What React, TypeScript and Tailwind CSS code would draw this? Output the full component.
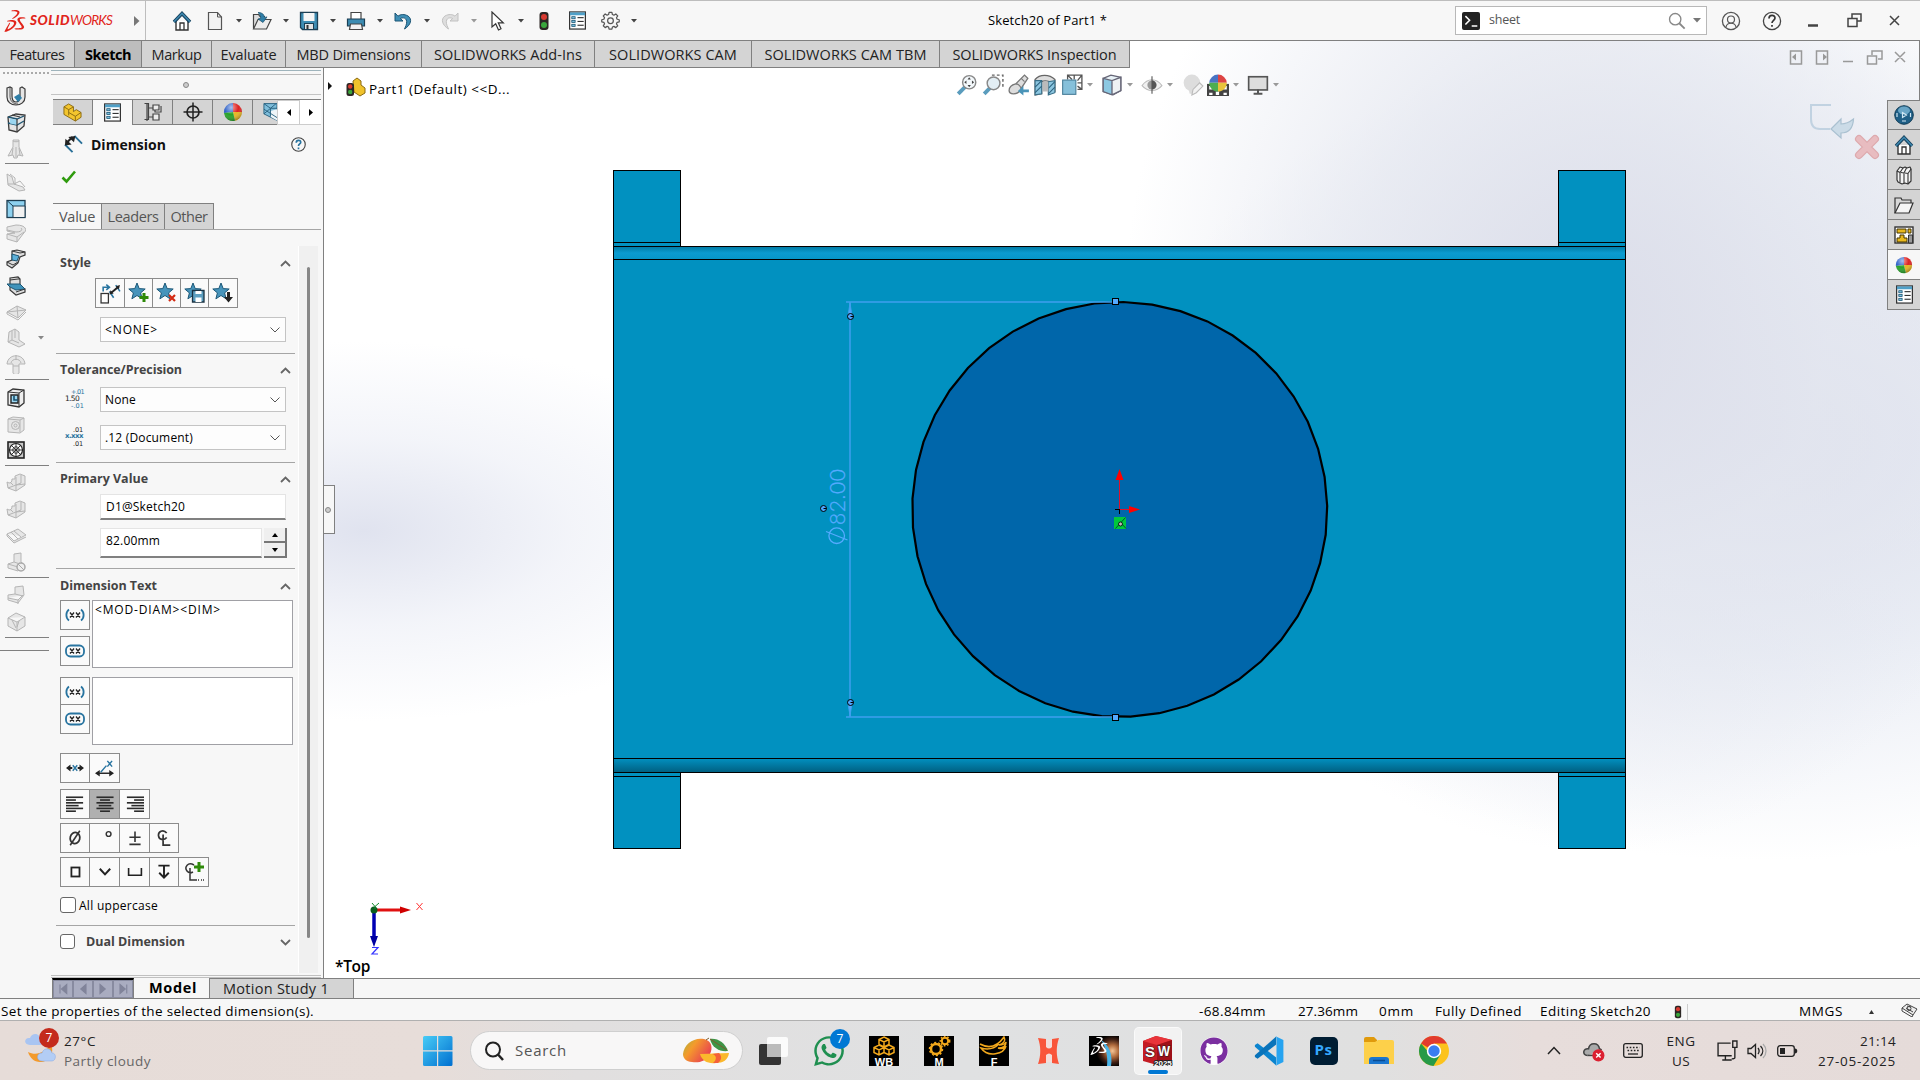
import React, { useLayoutEffect, useRef, useState } from "react";
import { SiDassaultsystemes } from "react-icons/si";
import { FaWhatsapp, FaGithub } from "react-icons/fa";

type Kids = { children?: React.ReactNode };

/* A single line of text whose letter spacing is adjusted to fill a given width. */
function T({ w, className = "", children }: { w: number; className?: string; children: string }) {
  const ref = useRef<HTMLSpanElement>(null);
  const [ls, setLs] = useState(0);
  useLayoutEffect(() => {
    if (ref.current) setLs((w - ref.current.getBoundingClientRect().width) / children.length);
  }, []);
  return (
    <span ref={ref} className={"inline-block shrink-0 whitespace-pre " + className} style={{ letterSpacing: ls }}>
      {children}
    </span>
  );
}

function I({ s = 20, h, vb = "0 0 20 20", className = "", children }: Kids & { s?: number; h?: number; vb?: string; className?: string }) {
  return (
    <svg width={s} height={h ?? s} viewBox={vb} fill="none" className={"shrink-0 " + className}>
      {children}
    </svg>
  );
}

const Caret = ({ c = "#444" }: { c?: string }) => (
  <span className="flex w-[23px] justify-center">
    <I s={6} h={4} vb="0 0 6 4"><path d="M0 0h6L3 3.5z" fill={c} /></I>
  </span>
);

const Box = ({ children }: Kids) => <span className="flex h-6 w-6 items-center justify-center">{children}</span>;

const House = () => (
  <I><path d="M4 10v9h12v-9" fill="#fff" stroke="#333" strokeWidth="1.4" /><path d="M8 19v-7h4v7" stroke="#333" strokeWidth="1.3" /><path d="M2 11l8-8.500 8 8.500" stroke="#16405c" strokeWidth="3.400" /><path d="M2 10.800l8-8.300 8 8.300" stroke="#3d86ad" strokeWidth="1.600" /></I>
);

const Ball = ({ s = 18 }: { s?: number }) => (
  <I s={s}>
    <defs><radialGradient id="shine" cx=".4" cy=".25" r=".8"><stop offset="0" stopColor="#fff" stopOpacity=".6" /><stop offset=".5" stopColor="#fff" stopOpacity="0" /><stop offset="1" stopColor="#000" stopOpacity=".4" /></radialGradient></defs>
    <path d="M10 10L1 11A9 9 0 0 1 10 1z" fill="#2f62c9" /><path d="M10 10V1a9 9 0 0 1 9 9z" fill="#d22" /><path d="M10 10l9 0a9 9 0 0 1-7 8.800z" fill="#e8b620" /><path d="M10 10l2 8.800A9 9 0 0 1 1 11z" fill="#27a327" />
    <circle cx="10" cy="10" r="9" fill="url(#shine)" />
  </I>
);

const ListIcon = ({ s = 20 }: { s?: number }) => (
  <I s={s}>
    <rect x="1.700" y="1" width="16.600" height="18" fill="#fff" stroke="#333" strokeWidth="1.300" />
    <rect x="2" y="1.500" width="16" height="3" fill="#4fa0c8" />
    {[7, 11, 15].map((y) => <g key={y}><rect x="4" y={y - 1} width="3.500" height="2.200" fill="#7cc2e0" stroke="#17506f" strokeWidth=".8" /><path d={`M10 ${y}h6.500`} stroke="#333" strokeWidth="1.200" /></g>)}
  </I>
);

const Traffic = ({ s = 20 }: { s?: number }) => (
  <I s={s}><rect x="5.500" y="1" width="9" height="18" rx="3" fill="#2c2624" /><circle cx="10" cy="6" r="3" fill="#d83a30" /><circle cx="10" cy="14" r="3" fill="#3aa63c" /></I>
);

function TitleBar() {
  return (
    <div className="flex h-[41px] shrink-0 items-center border-b border-t border-b-[#808080] border-t-[#bdbdbd] bg-[#f7f7f7]">
      <div className="flex h-full w-[146px] items-center border-r border-[#bdbdbd]">
        <div className="ml-[4px] w-[26px] text-[#e1251b]"><SiDassaultsystemes size={22} /></div>
        <div className="flex items-baseline font-[Lato] text-[13.500px] italic leading-none text-[#e1251b]">
          <T w={40} className="font-black">SOLID</T>
          <T w={42}>WORKS</T>
        </div>
        <I s={6} h={10} vb="0 0 6 10" className="ml-[22px]"><path d="M0 0l5.500 5L0 10z" fill="#777" /></I>
      </div>
      <div className="ml-6 flex items-center">
        <Box><House /></Box>
        <span className="w-[9px]" />
        <Box><I><path d="M3.500 1.500h9l4 4.500v12.500h-13z" fill="#f3f3f3" stroke="#555" strokeWidth="1.200" /><path d="M12.500 1.500v4.500h4" stroke="#555" /></I></Box><Caret />
        <Box><I><path d="M1.500 17.500v-14h5l1.500 2h5" fill="#ddd" stroke="#444" strokeWidth="1.200" /><path d="M1.500 18L6 8.500h13L14.500 18z" fill="#ececec" stroke="#444" strokeWidth="1.200" /><path d="M6 1.500c4 0 6 1.500 6.500 5l2.500-.6-4 5.600-5-3.500 2.700-.7C8.500 5 8 3 6 1.500z" fill="#2f7fa8" stroke="#1a4d69" strokeWidth=".7" /></I></Box><Caret />
        <Box><I><path d="M1.500 1.500h17v17h-15l-2-2z" fill="#3f8db3" stroke="#1c3f54" strokeWidth="1.300" /><rect x="4.500" y="2" width="11" height="8" fill="#f6f6f6" /><rect x="5.500" y="12.500" width="9" height="6" fill="#e4e4e4" stroke="#1c3f54" /><rect x="7.500" y="14" width="2" height="4" fill="#333" /></I></Box><Caret />
        <Box><I><path d="M5 8V1.500h10V8" fill="#fff" stroke="#444" strokeWidth="1.200" /><path d="M1.500 8h17v7h-17z" fill="#3c8bb1" stroke="#1c3f54" strokeWidth="1.200" /><path d="M3.500 18.500l1-5.500h11l1 5.500z" fill="#f2f2f2" stroke="#444" strokeWidth="1.200" /></I></Box><Caret />
        <Box><I><path d="M2 2v8h8L7.300 7.500c4-2 8 .5 5.700 7l-1.500 3.500C18 14 19.500 8 15 5 11.500 3 7.500 3 5 5.200z" fill="#3f8fb6" stroke="#1b5474" strokeWidth="1" /></I></Box><Caret />
        <Box><I><path d="M18 2v8h-8l2.700-2.500c-4-2-8 .5-5.700 7l1.500 3.500C2 14 .5 8 5 5c3.500-2 7.500-2 10 .2z" fill="#dedede" stroke="#c2c2c2" strokeWidth="1" /></I></Box><Caret c="#999" />
        <Box><I><path d="M5 1v15l3.700-3.300L11.500 19l2.500-1.200-2.700-6h5z" fill="#fff" stroke="#333" strokeWidth="1.200" /></I></Box><Caret />
        <Box><Traffic /></Box>
        <span className="w-[9px]" />
        <Box><ListIcon s={19} /></Box>
        <span className="w-[9px]" />
        <Box><I s={19}>
          <path d="M8.500 1.500h3l.5 2.200 1.600.7 2-1.300 2 2-1.300 2 .7 1.600 2.200.5v2.200l-2.200.5-.7 1.600 1.300 2-2 2-2-1.300-1.600.7-.5 2.200h-3L8 16.900l-1.600-.7-2 1.300-2-2 1.300-2L3 11.900l-2.200-.5V9.200L3 8.700l.7-1.600-1.300-2 2-2 2 1.300L8 3.700z" stroke="#555" strokeWidth="1.300" strokeLinejoin="round" /><circle cx="10" cy="10.200" r="3" stroke="#555" strokeWidth="1.300" /></I></Box><Caret />
      </div>
      <div className="ml-[343px] text-[13px]"><T w={119}>Sketch20 of Part1 *</T></div>
      <div className="ml-[348px] flex h-[29px] w-[252px] items-center border border-[#b8b8b8] bg-white">
        <div className="ml-[6px] mr-[9px] flex h-[18px] w-[18px] items-center justify-center rounded-[2px] bg-[#222]">
          <I s={14}><path d="M2 3l6 6-6 6M11 17h8" stroke="#fff" strokeWidth="2.200" /></I>
        </div>
        <T w={31} className="text-[12.500px] text-[#555]">sheet</T>
        <I s={18} className="ml-[148px]"><circle cx="8" cy="8" r="6.300" stroke="#888" strokeWidth="1.500" /><path d="M12.500 12.500l6 6" stroke="#888" strokeWidth="2" /></I>
        <I s={8} h={5} vb="0 0 8 5" className="ml-[7px]"><path d="M0 0h8L4 4.500z" fill="#777" /></I>
      </div>
      <I s={20} className="ml-[14px]"><circle cx="10" cy="10" r="8.600" stroke="#555" strokeWidth="1.300" /><circle cx="10" cy="8.500" r="3.500" stroke="#555" strokeWidth="1.200" /><path d="M5 16c1-5 9-5 10 0" stroke="#555" strokeWidth="1.200" /></I>
      <I s={20} className="ml-[21px]"><circle cx="10" cy="10" r="8.600" stroke="#444" strokeWidth="1.300" /><path d="M7 7.500c0-4 6-4 6-.5 0 2.200-3 2.500-3 5M10 14v1.800" stroke="#333" strokeWidth="1.700" /></I>
      <I s={10} h={3} vb="0 0 10 3" className="ml-[26px] mt-[10px]"><path d="M0 1.500h10" stroke="#444" strokeWidth="2.500" /></I>
      <I s={15} vb="0 0 15 15" className="ml-[29px]"><path d="M5 5V1h9v7h-4" stroke="#444" strokeWidth="1.500" /><path d="M1 5.500h9v8H1z" stroke="#444" strokeWidth="1.500" /></I>
      <I s={11} vb="0 0 11 11" className="ml-[27px]"><path d="M1 1l9 9M10 1l-9 9" stroke="#444" strokeWidth="1.500" /></I>
    </div>
  );
}

const tabs: [string, number, number][] = [
  ["Features", 75, 55], ["Sketch", 67, 46], ["Markup", 70, 50], ["Evaluate", 74, 56], ["MBD Dimensions", 136, 114],
  ["SOLIDWORKS Add-Ins", 173, 148], ["SOLIDWORKS CAM", 157, 128], ["SOLIDWORKS CAM TBM", 188, 162], ["SOLIDWORKS Inspection", 190, 164],
];

function CommandTabs() {
  return (
    <div className="flex h-[27px] w-[1130px] shrink-0 border-b border-[#808080] bg-[#d4d4d4]">
      {tabs.map(([t, w, tw]) => (
        <div key={t} style={{ width: w }} className={"flex shrink-0 items-center justify-center border-r border-[#808080] pt-px text-[14.500px] text-[#222] " + (t === "Sketch" ? "bg-[#bdbdbd] font-bold text-black" : "")}>
          <T w={tw}>{t}</T>
        </div>
      ))}
    </div>
  );
}

/* Sheet-metal command glyphs; those filled with currentColor are drawn as unavailable commands. */
const shapes: Record<string, React.ReactNode> = {
  channel: <><path d="M1 2l3-1 2 1v8c0 4 1 6 4 6s4-2 4-6V2l2-1 3 2v8c0 5-4 8-9 8s-9-3-9-8z" fill="#e5e5e5" stroke="#3a3a3a" strokeWidth="1.200" /><path d="M4 1v9c0 5 3 8 8 8" stroke="#3a3a3a" strokeWidth=".8" /><path d="M8 11l5-3 3 4-4 4z" fill="#2f7fa8" /></>,
  wrap: <><path d="M2 4l8-3 9 1-1 11-7 6-8-2z" fill="#e5e5e5" stroke="#3a3a3a" strokeWidth="1.300" /><path d="M2 4l9 2 7-3M2 10l9 2 7-4" stroke="#1f5673" strokeWidth="1.300" /><path d="M4 5.500l7 1.500v5l-7-1.500z" fill="#9bd6f0" /><path d="M11 6v12M6 2l8 2" stroke="#3a3a3a" strokeWidth="1.200" /></>,
  flare: <><path d="M7 1h6v7l4 9-5-1-1 3H8l-1-3-5 1 5-9z" fill="currentColor" stroke="#b5b5b5" /><path d="M7 2c1 1 5 1 6 0M10 8v10M7 9l-1 7M13 9l1 7" stroke="#b5b5b5" /></>,
  edge: <><path d="M1 2l5 3 2 7 9 3 2 3-6 1-11-6z" fill="currentColor" stroke="#b5b5b5" /><path d="M4 2l5 4v7M2 12l6 0M8 12l6-3 5 6" stroke="#b5b5b5" /></>,
  miter: <><rect x="1" y="1.500" width="18" height="17" fill="#8dd1ef" stroke="#1d3d50" strokeWidth="1.300" /><path d="M7 7h12v11.500H7z" fill="#f1f1f1" stroke="#1d3d50" /><path d="M1.500 2L7 7" stroke="#1d3d50" /></>,
  hem: <><path d="M1 3l9-2c10 0 12 5 7 9l-6 8-10-3v-5l8-1-8-2z" fill="currentColor" stroke="#b5b5b5" /><path d="M1 6l9 2c5 0 7-2 5-4M1 10l10 3 7-5M11 13v5" stroke="#b5b5b5" /></>,
  jog: <><path d="M6 2l5-1 8 2v3l-5 2-2 6-6 5-5-3v-3l5-2z" fill="#ddd" stroke="#3a3a3a" strokeWidth="1.200" /><path d="M6 5l7 2-2 5-5-1z" fill="#5db1da" stroke="#1f5673" /><path d="M6 2l8 2 5-1M1 13l6 3 5-3" stroke="#3a3a3a" /></>,
  bend: <><path d="M4 2l8-1 2 2v8l5 2v3l-9 3-6-5z" fill="#ddd" stroke="#3a3a3a" strokeWidth="1.200" /><path d="M1 8l13 0 5 5-9 1-6-3z" fill="#3f93bb" stroke="#1f5673" /><path d="M4 4l8-1 2 0M10 16l9-3" stroke="#3a3a3a" /></>,
  cross: <><path d="M1 10l10-6 9 4-8 8z" fill="currentColor" stroke="#b5b5b5" /><path d="M1 10l19-2M11 4l1 12M1 10v2l11 6 8-8" stroke="#b5b5b5" /></>,
  corner: <><path d="M3 4l6-3 4 3v8l6 4-6 3-11-5z" fill="currentColor" stroke="#b5b5b5" /><path d="M6 3v9l-4 2M6 12l7 3M9 1v9" stroke="#b5b5b5" /></>,
  form: <><path d="M1 10c1-11 17-11 18 0h-6v9c-1 2-5 2-6 0v-9z" fill="currentColor" stroke="#b5b5b5" /><path d="M5 9c1-5 9-5 10 0M10 1v5M7 12h6" stroke="#b5b5b5" /></>,
  cut: <><path d="M2 4l5-3 11 1v13l-5 4-11-2z" fill="#eee" stroke="#333" strokeWidth="1.300" /><path d="M2 4l11 1 5-3M13 5v14" stroke="#333" /><path d="M5 7h7v8H5z" fill="#9bd6f0" stroke="#222" strokeWidth="1.400" /><path d="M8 8v4h4" stroke="#17506f" strokeWidth="1.600" /></>,
  hole: <><path d="M2 4l5-2 11 1v12l-4 3-12-1z" fill="currentColor" stroke="#b5b5b5" /><circle cx="9.500" cy="10.500" r="4" stroke="#b5b5b5" /><circle cx="9.500" cy="10.500" r="1.500" stroke="#b5b5b5" /><path d="M2 4l12 1 4-2M14 5v12" stroke="#b5b5b5" /></>,
  vent: <><rect x="2" y="2" width="16" height="16" fill="#c9c9c9" stroke="#222" strokeWidth="1.600" /><circle cx="10" cy="10" r="6.500" fill="#fff" stroke="#222" strokeWidth="1.200" /><circle cx="10" cy="10" r="3.300" stroke="#222" strokeWidth=".8" /><path d="M10 3v14M3 10h14M5 5l10 10M15 5L5 15" stroke="#222" strokeWidth=".9" /></>,
  unfold: <><path d="M9 3l5-2 5 2v9l-9 6-8-3-1-6 2 1c2 0 3-1 3-4h3z" fill="currentColor" stroke="#b5b5b5" /><path d="M10 4v8l5-2V2M2 15l8-3 9-1M10 12v6M4 9l3 3" stroke="#b5b5b5" /></>,
  flat: <path d="M1 8l11-5 8 6-12 6zM5 6l7 7M8 5l7 6M1 8v2l7 7 12-6" fill="currentColor" stroke="#b5b5b5" />,
  nobend: <><path d="M8 2l7-1v9l3 3-6 6-10-3v-4l6-2zM8 10l6 2M2 12l10 3" fill="currentColor" stroke="#b5b5b5" /><circle cx="15" cy="15" r="4" fill="#eee" stroke="#aaa" strokeWidth="1.500" /><path d="M12 12l6 6" stroke="#aaa" /></>,
  rip: <path d="M9 2l8-1 1 9-6 8-10-3v-5l7-1zM9 9l8 2M2 13l10 2 5-5M12 15v4" fill="currentColor" stroke="#b5b5b5" />,
  cube: <path d="M2 6l8-5 9 4v9l-8 5-9-5zM2 6l9 4 8-5M11 10v9M13 9l-2 6M6 8l4 8" fill="currentColor" stroke="#b5b5b5" />,
};
const rail: [string, number][] = [
  ["channel", 27], ["wrap", 27], ["flare", 26], ["-", 2], ["edge", 28], ["miter", 25], ["hem", 25], ["jog", 26], ["bend", 27], ["cross", 26], ["corner", 25], ["form", 27], ["-", 3],
  ["cut", 28], ["hole", 25], ["vent", 26], ["-", 3], ["unfold", 26], ["unfold", 27], ["flat", 26], ["nobend", 26], ["-", 3], ["rip", 26], ["cube", 27], ["-", 3],
];

function LeftRail() {
  return (
    <div className="flex w-[51px] shrink-0 flex-col bg-[#f7f7f7]">
      <div className="mb-[7px] ml-[3px] mt-[4px] h-[3px] w-[46px] shrink-0 border-t-2 border-dotted border-[#aaa]" />
      {rail.map(([n, h], i) =>
        n === "-" ? (
          <div key={i} style={{ height: h }} className="mb-[4px] ml-[5px] w-[44px] shrink-0 border-b border-[#808080]" />
        ) : (
          <div key={i} style={{ height: h }} className="flex shrink-0 items-center pl-[6px] text-[#e6e6e6]">
            <I s={20}>{shapes[n]}</I>
            {n === "corner" && <I s={6} h={4} vb="0 0 6 4" className="ml-[12px]"><path d="M0 0h6L3 3.500z" fill="#888" /></I>}
          </div>
        )
      )}
      <div className="mt-[8px] w-[49px] border-b border-[#808080]" />
    </div>
  );
}

const Head = ({ w, down, children }: { w: number; down?: boolean; children: string }) => (
  <div className="flex h-[22px] items-center justify-between pr-[7px] text-[12.500px] font-bold text-[#444]">
    <T w={w}>{children}</T>
    <I s={11} h={7} vb="0 0 11 7"><path d={down ? "M1 1l4.500 4.500L10 1" : "M1 6l4.500-4.500L10 6"} stroke="#666" strokeWidth="1.800" /></I>
  </div>
);
const Rule = () => <div className="-ml-[4px] h-px w-[239px] shrink-0 bg-[#a5a5a5]" />;
const Select = ({ w, children }: { w: number; children: string }) => (
  <div className="flex h-[25px] w-[186px] items-center justify-between border border-[#c4c4c4] bg-[#fdfdfd] pl-[4px] pr-[5px] text-[12px]">
    <T w={w}>{children}</T>
    <I s={10} h={6} vb="0 0 10 6"><path d="M.5 .5L5 5 9.500 .5" stroke="#555" /></I>
  </div>
);
const Btn = ({ on, first, w = "w-[30px]", children }: Kids & { on?: boolean; first?: boolean; w?: string }) => (
  <div className={"flex h-[30px] shrink-0 items-center justify-center border border-[#8c8c8c] " + w + (on ? " bg-[#b0b0b0]" : " bg-[#fafafa]") + (first ? "" : " -ml-px")}>{children}</div>
);
const Star = ({ children }: Kids) => (
  <I s={22} vb="0 0 22 22"><path d="M9 1l2.200 5.600 6 .4-4.600 3.900 1.500 5.900L9 13.500l-5.100 3.300 1.500-5.900L.8 7l6-.4z" fill="#4794bb" stroke="#1d5878" strokeWidth="1" />{children}</I>
);
const XX = ({ boxed }: { boxed?: boolean }) => (
  <I s={20} h={14} vb="0 0 20 14">
    {boxed ? <rect x="1" y="1.500" width="18" height="11" rx="4.500" stroke="#2874a0" strokeWidth="1.800" /> : <path d="M4 1.500C.5 4 .5 10 4 12.500M16 1.500c3.500 2.500 3.500 8.500 0 11" stroke="#2874a0" strokeWidth="1.800" />}
    <path d="M5 4.500l4 5M9 4.500l-4 5M11 4.500l4 5M15 4.500l-4 5" stroke="#222" strokeWidth="1.300" />
  </I>
);
const Lines = ({ a }: { a: number }) => (
  <I s={18}>{[0, 1, 2, 3, 4, 5].map((i) => { const w = i % 2 ? (i === 3 ? 14 : 11) : 19; return <path key={i} d={`M${(20 - w) * a} ${2.500 + i * 3.100}h${w}`} stroke="#2b2b2b" strokeWidth="1.800" />; })}</I>
);

function PropertyPanel() {
  const ptab = "flex w-[40px] shrink-0 items-center justify-center border-r border-[#808080] bg-[#d4d4d4] border-b";
  return (
    <div className="flex w-[273px] shrink-0 flex-col border-r border-[#808080] bg-[#f7f7f7]">
      <div className="mt-[2px] h-[5px] w-[270px] shrink-0 border-b border-t border-b-[#bbb] border-t-[#9fb4bc]" />
      <div className="flex h-[20px] w-[270px] shrink-0 items-center justify-center border-b border-[#c4c4c4]"><div className="h-[6px] w-[6px] rounded-full border border-[#888] bg-[#ccc]" /></div>
      <div className="ml-[2px] mt-[4px] flex h-[26px] w-[268px] shrink-0 border-t border-[#808080]">
        <div className={ptab}><I s={19}><path d="M1 4l5-3 5 3v5l3-2 5 3v5l-6 4-12-7z" fill="#f3c52e" stroke="#8a6a12" /><path d="M1 4l5 3v6M6 7l5-3M13 19v-5l6-4M13 14l-7-4" stroke="#8a6a12" /></I></div>
        <div className="flex w-[40px] shrink-0 items-center justify-center border-r border-[#808080]"><ListIcon s={19} /></div>
        <div className={ptab}><I s={20}><path d="M4 1v18M1.500 1.500h4v16h-4M5 6h5M5 15h5" stroke="#444" strokeWidth="1.200" /><path d="M10 3h6v5h-6zM10 12h6v6h-6zM12 8v2h6v-6" fill="#eee" stroke="#444" strokeWidth="1.200" /></I></div>
        <div className={ptab}><I s={20}><circle cx="10" cy="10" r="6" stroke="#222" strokeWidth="1.700" /><path d="M10 .5v19M.5 10h19" stroke="#222" strokeWidth="1.500" /></I></div>
        <div className={ptab}><Ball s={20} /></div>
        <div className="flex w-[24px] shrink-0 items-center justify-end border-b border-[#808080] bg-[#d4d4d4]"><I s={14} h={20} vb="0 0 15 20"><path d="M1 1h14v18L1 12z" fill="#7fbedb" stroke="#28617f" /><path d="M8 9l7-2v12l-7-4z" fill="#eef5f8" /><path d="M1 1l7 5v9M8 6h7M1 7l14 9M1 12L14 1" stroke="#28617f" /></I></div>
        <div className="flex w-[23px] shrink-0 items-center justify-center border border-[#ccc] bg-white"><I s={4} h={7} vb="0 0 4 7"><path d="M4 0v7L0 3.500z" fill="#000" /></I></div>
        <div className="flex w-[21px] shrink-0 items-center justify-center border-b border-[#ccc] bg-white"><I s={4} h={7} vb="0 0 4 7"><path d="M0 0v7l4-3.500z" fill="#000" /></I></div>
      </div>
      <div className="flex h-[38px] shrink-0 items-center pl-[13px]">
        <I s={19}><path d="M1 10l8 8M11 1l8 8" stroke="#2a7098" strokeWidth="2" /><path d="M3 8l6-6" stroke="#222" strokeWidth="2.200" /><path d="M1 11l.5-7 6.500 6zM12 1L4.500 2l6 5.500z" fill="#222" /></I>
        <T w={75} className="ml-[8px] text-[14px] font-bold text-[#111]">Dimension</T>
        <I s={15} className="ml-[125px]"><circle cx="10" cy="10" r="9" stroke="#444" strokeWidth="1.500" /><path d="M7 7.500c0-4 6-4 6-.5 0 2.200-3 2.500-3 5M10 14v2.200" stroke="#2874a0" strokeWidth="2.200" /></I>
      </div>
      <div className="h-[40px] shrink-0 pl-[10px] pt-[7px]"><I s={16} h={14} vb="0 0 16 14"><path d="M1.500 7.500l4 4 8.500-10" stroke="#2f9b0e" strokeWidth="2.600" /></I></div>
      <div className="flex h-[27px] w-[270px] shrink-0 border-b border-[#a5a5a5] pl-[2px] text-[14.500px] text-[#555]">
        <div className="flex w-[49px] items-center justify-center border-r border-t border-[#808080]"><T w={36}>Value</T></div>
        <div className="flex w-[63px] items-center justify-center border-r border-t border-[#808080] bg-[#d4d4d4]"><T w={51}>Leaders</T></div>
        <div className="flex w-[49px] items-center justify-center border-r border-t border-[#808080] bg-[#d4d4d4]"><T w={37}>Other</T></div>
      </div>
      <div className="mt-[16px] flex h-[729px] shrink-0">
        <div className="flex w-[247px] flex-col pl-[9px]">
          <div className="mt-[6px] h-[26px]"><Head w={31}>Style</Head></div>
          <div className="ml-[35px] flex h-[30px] shrink-0">
            <Btn first><I s={21}><rect x="1" y="10" width="7" height="9" fill="#fff" stroke="#333" strokeWidth="1.200" /><path d="M3 8V4h5M6 1.500L9 4 6 6.500" stroke="#2874a0" strokeWidth="1.500" /><path d="M9 8l4 6M15 2l4 6" stroke="#2874a0" strokeWidth="1.500" /><path d="M11 9l6-5" stroke="#222" strokeWidth="1.800" /><path d="M9 11l1-4 3 3zM19 2l-4 1 3 3z" fill="#222" /></I></Btn>
            <Btn w="w-[29px]"><Star><path d="M16 11v9M11.500 15.500h9" stroke="#2f8a0a" strokeWidth="3" /></Star></Btn>
            <Btn w="w-[29px]"><Star><path d="M13 13l6 6M19 13l-6 6" stroke="#d42a12" strokeWidth="2.200" /></Star></Btn>
            <Btn w="w-[29px]"><Star><path d="M8.500 8.500H20V20H8.500z" fill="#5d9fc0" stroke="#1b3343" strokeWidth="1.300" /><path d="M11.500 9h6v3h-6zM11.500 15.500h6V20h-6z" fill="#fff" /></Star></Btn>
            <Btn w="w-[30px]"><Star><path d="M15 10v5h-3l4.500 5.500L21 15h-3v-5z" fill="#222" /></Star></Btn>
          </div>
          <div className="ml-[40px] mt-[9px] h-[36px] shrink-0"><Select w={53}>{"<NONE>"}</Select></div>
          <Rule />
          <div className="mt-[5px] h-[28px] shrink-0"><Head w={122}>Tolerance/Precision</Head></div>
          <div className="flex h-[38px] shrink-0">
            <div className="relative w-[40px] font-[DejaVu_Sans] text-[6.500px] leading-none text-[#2874a0]"><span className="absolute left-[11px] top-[2px]"><T w={13}>+.01</T></span><span className="absolute left-[5px] top-[8px] text-[7.500px] text-[#222]"><T w={14}>1.50</T></span><span className="absolute left-[11px] top-[16px]"><T w={13}>-.01</T></span></div>
            <Select w={31}>None</Select>
          </div>
          <div className="flex h-[37px] shrink-0">
            <div className="relative w-[40px] font-[DejaVu_Sans] text-[6.500px] leading-none text-[#222]"><span className="absolute left-[13px] top-[2px]"><T w={10}>.01</T></span><span className="absolute left-[5px] top-[8px] text-[7px] font-bold text-[#2874a0]"><T w={18}>x.xxx</T></span><span className="absolute left-[13px] top-[16px]"><T w={10}>.01</T></span></div>
            <Select w={88}>.12 (Document)</Select>
          </div>
          <Rule />
          <div className="mt-[5px] h-[26px] shrink-0"><Head w={88}>Primary Value</Head></div>
          <div className="ml-[40px] flex h-[26px] w-[186px] shrink-0 items-center border border-b-2 border-[#e4e4e4] border-b-[#808080] bg-white pl-[5px] text-[12px]"><T w={79}>D1@Sketch20</T></div>
          <div className="ml-[40px] mt-[8px] flex h-[30px] shrink-0">
            <div className="w-[162px] border border-b-2 border-[#e4e4e4] border-b-[#808080] bg-white pl-[5px] pt-[3px] text-[12px]"><T w={54}>82.00mm</T></div>
            <div className="ml-[2px] flex w-[23px] flex-col">
              {[0, 1].map((k) => <div key={k} className="flex h-[15px] items-center justify-center border-b-2 border-r-2 border-[#777] bg-[#efefef]"><I s={6} h={4} vb="0 0 6 4"><path d={k ? "M0 0h6L3 4z" : "M0 4h6L3 0z"} fill="#000" /></I></div>)}
            </div>
          </div>
          <div className="h-[10px] shrink-0" />
          <Rule />
          <div className="mt-[6px] h-[25px] shrink-0"><Head w={97}>Dimension Text</Head></div>
          <div className="flex h-[77px] shrink-0">
            <div className="flex w-[32px] flex-col gap-[6px]"><Btn first><XX /></Btn><Btn first><XX boxed /></Btn></div>
            <div className="h-[68px] w-[201px] border border-[#a0a0a5] bg-white pl-[2px] text-[12px] leading-[18px]"><T w={126}>{"<MOD-DIAM><DIM>"}</T></div>
          </div>
          <div className="flex h-[76px] shrink-0">
            <div className="flex w-[32px] flex-col"><Btn first><XX /></Btn><div className="-mt-[3px]"><Btn first><XX boxed /></Btn></div></div>
            <div className="h-[68px] w-[201px] border border-[#a0a0a5] bg-white" />
          </div>
          <div className="flex h-[36px] shrink-0">
            <Btn first><I s={18}><path d="M0 10l5-4v3h2v2H5v3zM20 10l-5-4v3h-2v2h2v3z" fill="#222" /><path d="M7.500 7l5 6M12.500 7l-5 6" stroke="#2874a0" strokeWidth="1.600" /></I></Btn>
            <Btn w="w-[31px]"><I s={19}><path d="M2 15h16" stroke="#222" strokeWidth="1.500" /><path d="M0 15l5-3.500v7zM20 15l-5-3.500v7z" fill="#222" /><path d="M13 2l5 6M18 2l-5 6M6 14l6-7" stroke="#2874a0" strokeWidth="1.500" /></I></Btn>
          </div>
          <div className="flex h-[34px] shrink-0"><Btn first><Lines a={0} /></Btn><Btn on w="w-[31px]"><Lines a={0.5} /></Btn><Btn w="w-[31px]"><Lines a={1} /></Btn></div>
          <div className="flex h-[34px] shrink-0">
            <Btn first><I s={16}><ellipse cx="10" cy="10" rx="6" ry="7" stroke="#333" strokeWidth="2.200" transform="rotate(15 10 10)" /><path d="M4 19L16 1" stroke="#333" strokeWidth="2" /></I></Btn>
            <Btn w="w-[31px]"><I s={16}><circle cx="14.500" cy="5" r="3" stroke="#333" strokeWidth="1.800" /></I></Btn>
            <Btn w="w-[31px]"><I s={16}><path d="M3 9h14M10 2v13M3 18h14" stroke="#333" strokeWidth="2" /></I></Btn>
            <Btn w="w-[30px]"><I s={18}><path d="M13 4.500C9-.5 3 3 4 8c.5 4 6 5 9 1.500M9 6v12h8" stroke="#333" strokeWidth="1.900" /></I></Btn>
          </div>
          <div className="flex h-[40px] shrink-0">
            <Btn first><I s={18}><rect x="6" y="5" width="9" height="10" stroke="#222" strokeWidth="2" /></I></Btn>
            <Btn w="w-[31px]"><I s={16}><path d="M3.500 6l6.500 7 6.500-7" stroke="#222" strokeWidth="2.500" /></I></Btn>
            <Btn w="w-[31px]"><I s={16}><path d="M2 5v9h16V5" stroke="#222" strokeWidth="2" /></I></Btn>
            <Btn w="w-[30px]"><I s={16}><path d="M3 2h14M10 2v14M4 11l6 6 6-6" stroke="#222" strokeWidth="2.400" /></I></Btn>
            <Btn w="w-[31px]"><I s={20}><path d="M10 3C4-.5 0 5 3 9c1.500 2 4 2 6 1M6 6v12h7M14 18h1M17 18h1M19 18h1" stroke="#333" strokeWidth="1.500" /><path d="M15 0v10M10 5h10" stroke="#2f8a0a" strokeWidth="3" /></I></Btn>
          </div>
          <div className="flex h-[28px] shrink-0 gap-[3px] text-[12px] leading-[17px]"><div className="h-[16px] w-[16px] rounded-[3px] border border-[#666] bg-white" /><T w={79}>All uppercase</T></div>
          <Rule />
          <div className="flex h-[32px] shrink-0 items-center"><div className="mb-[2px] mr-[11px] h-[15px] w-[15px] rounded-[3px] border border-[#666] bg-white" /><div className="w-[212px]"><Head w={99} down>Dual Dimension</Head></div></div>
        </div>
        <div className="flex h-[727px] w-[20px] justify-center border-l border-white bg-[#f0f0f0] pt-[21px]"><div className="h-[671px] w-[3px] rounded bg-[#868686]" /></div>
      </div>
      <div className="h-[3px] w-[270px] border-b border-t border-[#c0c0c0]" />
    </div>
  );
}

const arc = Array.from({ length: 45 }, (_, k) => {
  const a = ((3 + 8 * k) * Math.PI) / 180;
  return `${(1119.700 - 207.500 * Math.cos(a)).toFixed(1)},${(509.500 - 207.500 * Math.sin(a)).toFixed(1)}`;
}).join(" ");

/* Graphics area: coordinates are window pixels. */
function Model() {
  return (
    <svg className="absolute inset-0" width={1596} height={937} viewBox="324 41 1596 937" fill="none">
      <defs>
        <linearGradient id="bt" x1="0" y1="0" x2="0" y2="1"><stop offset="0" stopColor="#007aa3" /><stop offset=".5" stopColor="#0b9bd0" /><stop offset="1" stopColor="#0696c8" /></linearGradient>
        <linearGradient id="bb" x1="0" y1="0" x2="0" y2="1"><stop offset="0" stopColor="#0290c0" /><stop offset="1" stopColor="#005f80" /></linearGradient>
      </defs>
      <g fill="#0191c0" stroke="#000" shapeRendering="crispEdges">
        <path d="M613.500 170.500h67v76h-67zM1558.500 170.500h67v76h-67zM613.500 772.500h67v76h-67zM1558.500 772.500h67v76h-67z" />
        <path d="M613.500 246.500h1012v526h-1012z" />
        <path d="M613.500 246.500h1012v13h-1012z" fill="url(#bt)" /><path d="M613.500 758.500h1012v14h-1012z" fill="url(#bb)" />
        <path d="M613.500 242.500h67M1558.500 242.500h67M613.500 776.500h67M1558.500 776.500h67" />
      </g>
      <polygon points={arc} fill="#0066aa" stroke="#000" strokeWidth="2.200" />
      <g stroke="#3f9fee">
        <path d="M846 302h269M846 717h269M850 302v415" strokeWidth="1.500" />
        <path d="M850 303l-2 13h4zM850 716l-2-13h4z" fill="#4da6ff" />
      </g>
      <circle cx="836.700" cy="535.700" r="7.800" stroke="#55aaff" strokeWidth="1.300" /><path d="M826 531.500l21.500 8.500" stroke="#55aaff" strokeWidth="1.300" />
      <text transform="translate(844.500 525) rotate(-90)" fontFamily="Lato" fontWeight="300" fontSize="21" fill="#55aaff" stroke="#55aaff" strokeWidth=".3" textLength="56">82.00</text>
      {[[850.5, 316.5], [850.5, 702.5], [823.5, 508.5]].map(([x, y]) => <g key={y} stroke="#000"><circle cx={x} cy={y} r="3" fill="#4da6ff" /><path d={`M${x} ${y}h3`} /></g>)}
      {[301.5, 717.5].map((y) => <rect key={y} x="1112.500" y={y - 3} width="6" height="6" fill="#55aaff" stroke="#000" />)}
      <path d="M1115 509.500h5M1119.500 507v7" stroke="#000" />
      <path d="M1119.500 509V478M1120 509.500h10" stroke="#e0102a" /><path d="M1119.500 469l-4 11h8zM1140 509.500l-11-3.500v7z" fill="#f00" />
      <rect x="1114" y="517" width="12" height="12" fill="#00c93c" /><path d="M1115.500 528.500l10-11M1122 524l4 4.500" stroke="#053" /><circle cx="1120.500" cy="524" r="2" fill="#bbb" stroke="#000" strokeWidth=".8" />
      <path d="M374 910h28" stroke="#e01010" strokeWidth="3" /><path d="M400 906.500l11 3.500-11 3.500z" fill="#d00000" />
      <path d="M374 910v28" stroke="#0000b4" strokeWidth="3.500" /><path d="M370 936h8l-4 11z" fill="#0000a0" /><circle cx="374" cy="910" r="3.500" fill="#0b5d1e" />
      <path d="M372 903l3 3.500 4-3.500M375 906v3" stroke="#138a2c" /><path d="M416.500 903l6 7M422.500 903l-6 7" stroke="#f33" /><path d="M372 947.500h6l-6 6.500h6" stroke="#33f" strokeWidth="1.200" />
      <g opacity=".9"><path d="M1831 105h-20v14c0 7 3 10 9 10h10" stroke="#bdd0e0" strokeWidth="2" /><path d="M1831 129l10-10v5c6 0 10-3 12.500-5-.5 9-5 14-12.500 14v5z" fill="#c8dae6" stroke="#a3bccd" strokeWidth="1.200" /></g>
      <path d="M1859 139l16 16M1875 139l-16 16" stroke="#dda9ad" strokeWidth="8" strokeLinecap="round" /><path d="M1859 139l16 16M1875 139l-16 16" stroke="#e8bcc0" strokeWidth="5.500" strokeLinecap="round" />
      <g stroke="#999" strokeWidth="1.500"><path d="M1790.500 51h11v13h-11zM1816.500 51h11v13h-11zM1843 61.500h10M1872 55v-4h10v8h-4M1867.500 56h9v8h-9zM1895 52l10 10M1905 52l-10 10" /></g>
      <path d="M1796 53.500v7l-4-3.500zM1823 53.500v7l4-3.500z" fill="#999" />
      <path d="M1919.500 41v60" stroke="#808080" />
    </svg>
  );
}

const HCaret = () => <span className="flex w-[14px] justify-center"><I s={6} h={4} vb="0 0 6 4"><path d="M0 0h6L3 3.500z" fill="#999" /></I></span>;

function HeadsUp() {
  return (
    <div className="absolute left-[632px] top-[32px] flex h-[24px] items-center">
      <I s={22} className="mr-[4px]"><path d="M9 11L2 18" stroke="#5a9cbd" strokeWidth="3.500" /><circle cx="12" cy="7.500" r="6" fill="#f3f8fb" stroke="#888" strokeWidth="1.300" /><path d="M12 3l1.500 2h-3zM12 12l1.500-2h-3zM7.500 7.500l2-1.500v3zM16.500 7.500l-2-1.500v3z" fill="#444" /></I>
      <I s={22} className="mr-[4px]"><path d="M9 1h10v12" stroke="#666" strokeDasharray="2.500 2" strokeWidth="1.300" /><path d="M8 12l-6 6" stroke="#5a9cbd" strokeWidth="3.500" /><circle cx="10.500" cy="8.500" r="5.800" fill="#e3eef4" stroke="#888" strokeWidth="1.300" /></I>
      <I s={22} className="mr-[4px]"><path d="M1 15c0-3 2-5 6-6l8-8 3 3-6 9c-1 3-4 5-7 5-2 0-4-1-4-3z" fill="#ddd" stroke="#777" strokeWidth="1.200" /><path d="M7 9c2 0 4 2 5 4M12 4l3 3" stroke="#777" /><path d="M19 14h-5v-3l-5 4.500 5 4v-3h5z" fill="#4a94b8" /></I>
      <I s={22} className="mr-[5px]"><path d="M1 5c4-5 13-5 18 0v11l-5 2V7c-3-1-5-1-7 0v11l-6 1z" fill="#ddd" stroke="#666" strokeWidth="1.200" /><path d="M1 6h6v12l-6 1zM13 7l6-1v11l-6 2z" fill="#8cc6e0" stroke="#3a718a" /><path d="M1 12l6-6M1 17l6-6M13 13l6-6M13 18l6-6" stroke="#2d6480" /><path d="M8 7c2-1 3-1 5 0v9H8z" fill="#bbb" /></I>
      <I s={22}><path d="M6 5V1h13v13h-4M6 1l4 4M19 1l-4 5M19 14l-4-3M12 1v4M19 8h-4" stroke="#555" strokeWidth="1.200" /><rect x="1.500" y="5.500" width="12" height="13" fill="#86c0da" stroke="#4a7f99" /></I>
      <HCaret /><span className="w-[4px]" />
      <I s={22}><path d="M2 4l7-3 9 2v12l-7 4-9-3z" fill="#e8f2f7" stroke="#667" strokeWidth="1.200" /><path d="M2 4l8 2v13l-8-3z" fill="#8cc8e2" /><path d="M10 6l8-3v12l-8 4z" fill="#eef2f4" /><path d="M2 4l8 2 8-3v12l-8 4-8-3zM10 6v13" stroke="#667" strokeWidth="1.200" /></I>
      <HCaret /><span className="w-[4px]" />
      <I s={22}><path d="M1 10.500c5-7 13-7 18 0-5 6-13 6-18 0z" fill="#f0f0f0" stroke="#bbb" /><circle cx="10" cy="10" r="4.200" fill="#999" /><path d="M10 6a4 4 0 0 1 0 8" fill="#555" /><path d="M10 2v16" stroke="#555" /></I>
      <HCaret /><span className="w-[5px]" />
      <I s={22} className="mr-[3px]"><circle cx="9" cy="8" r="7.500" fill="#ddd" /><path d="M6 14h6l-1 4H7z" fill="#ddd" /><path d="M9 19l1-5 6-6 3 3-6 6z" fill="#f2f2f2" stroke="#bbb" /></I>
      <I s={22}><path d="M0 9h20v11H0z" fill="#444" /><path d="M2 11h3v3H2zM8 16h3v3H8zM15 11h3v3h-3zM2 17h3v2H2zM15 17h3v2h-3z" fill="#fff" /><path d="M10 8H2a8 8 0 0 1 8-7.500z" fill="#4a74c4" /><path d="M10 8V.5A8 8 0 0 1 18 8z" fill="#d44" /><path d="M10 8h8c0 5-4 8-8 8z" fill="#e8c33c" /><path d="M10 8H2c0 5 4 8 8 8z" fill="#4cae50" /></I>
      <HCaret /><span className="w-[4px]" />
      <I s={22}><rect x="1.500" y="2.500" width="17" height="12" fill="#ddd" stroke="#555" strokeWidth="1.500" /><path d="M10 14v4M6 18h8" stroke="#555" strokeWidth="1.800" /></I>
      <HCaret />
    </div>
  );
}

function TaskPane() {
  const icons = [
    <I key="a"><circle cx="10" cy="10" r="9.300" fill="#1f5f86" stroke="#123c56" /><ellipse cx="10" cy="5.500" rx="6" ry="4" fill="#6aa6c6" /><path d="M8.500 7.500l4 2.500-4 2.500zM3 8v4M16.500 8v4M8 16h4" stroke="#cfe6f2" strokeWidth="1.200" /></I>,
    <House key="b" />,
    <I key="c"><path d="M3 6l3-4 3 1 2-1 2 1 3-1 1 2v12l-3 3-3-1-3 1-4-2-1-2z" fill="#f4f4f4" stroke="#333" strokeWidth="1.200" strokeLinejoin="round" /><path d="M3 6l3 1.500L9 3M6 7.500v10M7 7.500l3 .5 2.500-5M10 8v10.500M11 8l3 .5L17 4M14 8.500V19" stroke="#333" strokeWidth="1.100" /></I>,
    <I key="d"><path d="M1 18V3h6l1 2h9v3" fill="#d8d8d8" stroke="#333" strokeWidth="1.200" /><path d="M1 18L6 8h13l-4 10z" fill="#f5f5f5" stroke="#333" strokeWidth="1.200" /></I>,
    <I key="e"><rect x="1" y="2" width="18" height="16" fill="#fff" stroke="#333" strokeWidth="1.400" /><path d="M3 4h9v4H3zM14 4h3v4h-3zM6 10h4v3h3v4H3v-4h3z" fill="#e9b91d" stroke="#443500" /><path d="M14.500 10v8h4v-8z" fill="#999" stroke="#333" /></I>,
    <Ball key="f" s={18} />,
    <ListIcon key="g" s={19} />,
  ];
  return (
    <div className="absolute right-0 top-[59px] flex w-[33px] flex-col border-l border-t border-[#808080] bg-[#d4d4d4]">
      {icons.map((ic, i) => <div key={i} className={"flex items-center justify-center border-b border-[#808080] " + (i === 0 ? "h-[29px] " : "h-[30px] ") + (i === 5 ? "bg-[#f7f7f7]" : "")}>{ic}</div>)}
    </div>
  );
}

function Viewport() {
  return (
    <>
      <div className="absolute inset-0 bg-[radial-gradient(ellipse_470px_540px_at_1270px_270px,rgba(219,221,233,0.950),rgba(227,230,239,0.750)_50%,rgba(255,255,255,0)_100%),radial-gradient(ellipse_640px_420px_at_1440px_400px,rgba(220,223,236,1),rgba(230,234,243,0.850)_50%,rgba(255,255,255,0)_100%),radial-gradient(ellipse_420px_190px_at_40px_490px,rgba(224,227,239,1),rgba(238,240,247,0.700)_50%,rgba(255,255,255,0)_100%)]" />
      <Model />
      <HeadsUp />
      <div className="absolute left-[4px] top-[35px] flex items-center text-[13.500px] text-black">
        <I s={5} h={8} vb="0 0 5 8" className="mb-[4px]"><path d="M0 0l4 4-4 4z" fill="#111" /></I>
        <I s={20} className="mb-[2px] ml-[13px]"><path d="M7 4l4-3 4 3v4l4 3v5l-5 3-6-4z" fill="#f0c22b" stroke="#8a6a12" /><rect x=".5" y="6" width="7.500" height="13" rx="2.500" fill="#2c2624" /><circle cx="4.200" cy="9.500" r="2.200" fill="#d83a30" /><circle cx="4.200" cy="15" r="2.200" fill="#3aa63c" /></I>
        <T w={141} className="ml-[3px] mt-[3px]">{"Part1 (Default) <<D..."}</T>
      </div>
      <div className="absolute left-[11px] top-[914px] text-[15.500px] font-semibold text-black"><T w={35}>*Top</T></div>
      <div className="absolute -left-[2px] top-[444px] flex h-[49px] w-[13px] items-center justify-center border border-l-0 border-[#808080] bg-[#f7f7f7]"><div className="h-[6px] w-[6px] rounded-full border border-[#888] bg-[#ccc]" /></div>
      <TaskPane />
    </>
  );
}

function BottomTabs() {
  return (
    <div className="flex h-[21px] shrink-0 border-b border-[#808080] bg-[#f7f7f7] text-[14.500px]">
      <div className="ml-[52px] flex w-[82px] border-l border-r border-t-2 border-[#808080] border-t-black bg-[#a9acc0]">
        {["M13 2L6 8l7 6zM4 2v12", "M12 2L5 8l7 6z", "M4 2l7 6-7 6z", "M4 2l7 6-7 6zM13 2v12"].map((d) => <div key={d} className="flex h-[18px] w-[20px] items-center justify-center border border-[#888ba0]"><I s={12} vb="0 0 16 16"><path d={d} fill="#81849a" stroke="#81849a" strokeWidth="1.500" /></I></div>)}
      </div>
      <div className="flex w-[75px] items-center justify-center pl-[3px] font-bold text-black"><T w={48}>Model</T></div>
      <div className="flex w-[145px] items-center border-l border-r border-t border-[#808080] bg-[#d4d4d4] pl-[13px] text-[#222]"><T w={106}>Motion Study 1</T></div>
      <div className="flex-1 border-t border-[#808080]" />
    </div>
  );
}

function StatusBar() {
  return (
    <div className="flex h-[22px] shrink-0 items-center overflow-hidden border-b border-[#b0b0b0] bg-[#f7f7f7] pl-[1px] pt-[5px] text-[13.500px] leading-none text-black">
      <div className="w-[1198px]"><T w={313}>Set the properties of the selected dimension(s).</T></div>
      <div className="w-[99px]"><T w={67}>-68.84mm</T></div>
      <div className="w-[81px]"><T w={60}>27.36mm</T></div>
      <div className="w-[56px]"><T w={35}>0mm</T></div>
      <div className="w-[105px]"><T w={87}>Fully Defined</T></div>
      <div className="w-[131px]"><T w={111}>Editing Sketch20</T></div>
      <Traffic s={14} />
      <div className="ml-[2px] h-full w-[112px] border-l border-[#ccc]" />
      <T w={44}>MMGS</T>
      <I s={5} h={4} vb="0 0 5 4" className="ml-[26px]"><path d="M0 4h5L2.500 0z" fill="#333" /></I>
      <I s={17} h={14} vb="0 0 17 14" className="mb-[5px] ml-[27px]"><path d="M1 5l5-4 10 5-4 6z" fill="#eee" stroke="#444" /><path d="M1 5v3l10 6 1-2M5 5l7 4M6 3l4 1" stroke="#444" /><circle cx="8" cy="5.500" r="2" stroke="#444" /></I>
    </div>
  );
}

const Cell = ({ children }: Kids) => <div className="relative flex w-[55px] shrink-0 items-center justify-center">{children}</div>;

const Ansys = ({ l, children }: Kids & { l: string }) => (
  <svg width={30} height={30} viewBox="0 0 30 30" fill="none" className="bg-black">
    <g stroke="#f2a81c" strokeWidth="1.500">{children}</g>
    <text x="15" y="29.500" textAnchor="middle" fontFamily="Liberation Sans" fontWeight="bold" fontSize="11" fill="#fff">{l}</text>
  </svg>
);

function Taskbar() {
  return (
    <div className="flex h-[59px] shrink-0 items-center bg-[linear-gradient(90deg,#e6dcd8_0%,#e7ddd9_22%,#e1dfdf_30%,#e0e1e2_50%,#e0e0e0_72%,#e7dddb_80%,#e5dbd9_100%)]">
      <div className="flex w-[423px] items-center pl-[24px]">
        <div className="relative -mt-[6px] h-[40px] w-[40px]">
          <svg width={40} height={40} viewBox="0 0 40 40" className="absolute inset-0">
            <path d="M4 24c8 4 17 1 23-8 4 10-2 18-11 18-6 0-10-4-12-10z" fill="#f39a2c" />
            <path d="M6 17c-7 0-6-8 0-7 2-6 10-5 10 1 4 1 3 6 0 6z" fill="#a9c5f2" /><path d="M18 33c-6 0-6-8 0-8 2-6 9-5 10 0 5 0 4 8 0 8z" fill="#b3cdf5" stroke="#86a9e4" strokeWidth=".5" />
          </svg>
          <div className="absolute left-[15px] top-0 flex h-[20px] w-[20px] items-center justify-center rounded-full bg-[#c42b1c] text-[12px] text-white">7</div>
        </div>
        <div className="flex flex-col items-start text-[13.500px] leading-[20px]"><T w={32} className="text-[#222]">27°C</T><T w={87} className="text-[#666]">Partly cloudy</T></div>
      </div>
      <I s={30} vb="0 0 30 30"><defs><linearGradient id="win" x1="0" y1="0" x2="1" y2="1"><stop offset="0" stopColor="#48ccf6" /><stop offset="1" stopColor="#006fd0" /></linearGradient></defs><path d="M1.500 0H14v14.200H0V1.500Q0 0 1.500 0zM15.200 0H28q1.500 0 1.500 1.500v12.700H15.200zM0 15.500h14V30H1.500Q0 30 0 28.500zM15.200 15.500h14.300v13Q29.500 30 28 30H15.200z" fill="url(#win)" /></I>
      <div className="ml-[17px] flex h-[39px] w-[273px] shrink-0 items-center rounded-full border border-[#cfcfcf] bg-[#f8f7f7] pl-[13px]">
        <I s={20}><circle cx="9" cy="8.500" r="7" stroke="#222" strokeWidth="2" /><path d="M14 13.500l5 5.500" stroke="#222" strokeWidth="2.500" /></I>
        <T w={52} className="ml-[11px] text-[15px] text-[#555]">Search</T>
        <svg width={50} height={28} viewBox="0 0 50 28" fill="none" className="ml-[115px]">
          <defs><linearGradient id="mango" x1="0" y1="0" x2="1" y2=".6"><stop offset="0" stopColor="#a6b63c" /><stop offset=".4" stopColor="#f49a2c" /><stop offset="1" stopColor="#e83e52" /></linearGradient></defs>
          <path d="M1 17C2 7 12 0 22 2c8 2 9 9 6 15-4 8-12 9-18 8-6 0-9-4-9-8z" fill="url(#mango)" /><path d="M28 2c8-1 15 4 18 12-8 1-16-3-18-12z" fill="#3f9446" /><path d="M28 2l17 11M24 3l3-2" stroke="#7d5b2c" />
          <path d="M18 17l29-1c-1 7-6 10-13 10-8 1-14-2-16-9z" fill="#fbb82c" /><path d="M30 17c5 1 5 6 1 9l5 0c4-3 4-7 1-10z" fill="#f4603a" />
        </svg>
      </div>
      <div className="ml-[3px] flex items-center">
        <Cell><svg width={30} height={30} viewBox="0 0 30 30"><rect x="0" y="8" width="22" height="21" rx="2" fill="#333" /><rect x="8" y="1" width="21" height="20" rx="2" fill="#fff" fillOpacity=".85" /><path d="M8 8h14v13H8z" fill="#bbb" /></svg></Cell>
        <Cell><span className="text-[#1f8f50]"><FaWhatsapp size={34} /></span><div className="absolute -top-[5px] left-[29px] flex h-[20px] w-[20px] items-center justify-center rounded-full bg-[#0078d4] text-[12px] text-white">7</div></Cell>
        <Cell><Ansys l="WB"><path d="M15 1l5 2.500v5L15 11l-5-2.500v-5zM10 9l5 2.500v5L10 19l-5-2.500v-5zM20 9l5 2.500v5L20 19l-5-2.500v-5zM10 3.500l5 2.500 5-2.500M15 6v5M5 11.500l5 2.500 5-2.500 5 2.500 5-2.500M10 14v5M20 14v5" /></Ansys></Cell>
        <Cell><Ansys l="M"><circle cx="12" cy="13" r="5" strokeWidth="2.500" /><circle cx="12" cy="13" r="6.500" strokeDasharray="2 2" /><circle cx="21" cy="5" r="3.200" strokeWidth="2" /><circle cx="21" cy="5" r="4.700" strokeDasharray="1.700 1.700" /></Ansys></Cell>
        <Cell><Ansys l="F"><path d="M1 8c9 5 17 3 24-7 2 4-1 7-5 8 4 0 6-1 7-3 0 5-4 6-8 6 4 1 7 0 8-2-2 8-18 12-25 2 7 2 13 1 18-4" /></Ansys></Cell>
        <Cell><svg width={24} height={30} viewBox="0 0 24 30"><path d="M6 4h12v22H6z" fill="#f4dcd8" /><path d="M1 2l8 1v8c2 2 4 2 6 0V3l7-1c-3 9-3 17 0 26l-7-1v-8c-2-2-4-2-6 0v8l-8 1c3-9 3-17 0-26z" fill="#f9553a" /></svg></Cell>
        <Cell><div className="relative h-[30px] w-[30px] overflow-hidden bg-[radial-gradient(circle_at_78%_50%,#f6c596_0%,#b06a3c_22%,#402015_42%,#000_58%)] text-white"><svg width={30} height={30} viewBox="0 0 30 30" className="absolute"><path d="M12 4c8 5 12 14 10 26h-4C19 20 17 11 12 4z" fill="#49b3e6" /></svg><SiDassaultsystemes size={18} className="absolute left-px top-px" /></div></Cell>
        <Cell>
          <div className="absolute -top-[24px] left-[3px] flex h-[48px] w-[48px] items-center justify-center rounded-[5px] border border-white/60 bg-[#f2f2f2]">
            <svg width={30} height={30} viewBox="0 0 30 30"><path d="M0 5L13 0l16 4v20l-15 5L0 25z" fill="#c41c24" /><path d="M0 5l14 4 15-5L13 0z" fill="#e8343a" /><path d="M14 9l15-5v20l-15 5z" fill="#9e1118" />
              <g fontFamily="Liberation Sans" fontWeight="bold" fill="#fff" stroke="#222" paintOrder="stroke"><text x="2" y="21" fontSize="15" strokeWidth="1">S</text><text x="15" y="20" fontSize="14" textLength="12" lengthAdjust="spacingAndGlyphs" strokeWidth="1">W</text><text x="11" y="29.500" fontSize="8" strokeWidth="2">2025</text></g></svg>
            <div className="absolute bottom-0 left-[13px] h-[4px] w-[20px] rounded-full bg-[#0078d4]" />
          </div>
        </Cell>
        <Cell><div className="flex h-[28px] w-[28px] items-center justify-center rounded-full bg-white text-[#7b2fa0]"><FaGithub size={28} /></div></Cell>
        <Cell><svg width={30} height={30} viewBox="0 0 100 100"><path d="M12 24l62 48v26L3 36v-6z" fill="#0b84cf" /><path d="M12 76l62-48V2L3 64v6z" fill="#0973ba" /><path d="M72 1l26 12v74L72 99c2-1 3-3 3-5V6c0-2-1-4-3-5z" fill="#26a3f0" /></svg></Cell>
        <Cell><div className="flex h-[28px] w-[28px] items-center justify-center rounded-[5px] bg-[#001d33] pb-[2px] text-[15px] font-bold text-[#35a8ff]"><T w={18}>Ps</T></div></Cell>
        <Cell><svg width={30} height={28} viewBox="0 0 30 28"><path d="M0 2q0-2 2-2h8l3 3v4H0z" fill="#e09a0c" /><path d="M0 5h11l3-2h14q2 0 2 2v22H0z" fill="#fdd04a" /><path d="M5 27v-4q0-3 3-3h14q3 0 3 3v4z" fill="#1a76cf" /><path d="M9 23.500h12" stroke="#0a4c93" strokeWidth="1.500" /></svg></Cell>
        <Cell><svg width={30} height={30} viewBox="0 0 30 30"><circle cx="15" cy="15" r="15" fill="#fcc31c" /><path d="M15 15L2 7.500A15 15 0 0 1 28 7.500H15z" fill="#e23b2e" /><path d="M15 15H8.500L2 7.500A15 15 0 0 0 14.500 30l7-11.500z" fill="#269a48" /><circle cx="15" cy="15" r="7.200" fill="#fff" /><circle cx="15" cy="15" r="5.700" fill="#3a7df0" /></svg></Cell>
      </div>
      <div className="ml-auto flex items-center text-[#222]">
        <I s={14} h={9} vb="0 0 14 9"><path d="M1 8l6-6.500L13 8" stroke="#222" strokeWidth="1.500" /></I>
        <I s={22} className="ml-[22px]"><path d="M4 14c-5 0-4-7 1-6 1-6 9-6 10 0l2 1" fill="#aaa" stroke="#444" strokeWidth="1.400" /><path d="M4 14h6" stroke="#444" strokeWidth="1.400" /><circle cx="14" cy="14" r="5.500" fill="#dc2031" /><path d="M12 12l4 4M16 12l-4 4" stroke="#fff" strokeWidth="1.300" /></I>
        <I s={20} h={15} vb="0 0 20 15" className="ml-[18px]"><rect x=".7" y=".7" width="18.600" height="13.600" rx="2" stroke="#222" strokeWidth="1.300" /><path d="M3.500 4.500h13M4.500 7.500h12" stroke="#222" strokeWidth="1.600" strokeDasharray="1.600 1.600" /><path d="M5 11h10" stroke="#222" strokeWidth="1.300" /></I>
        <div className="ml-[23px] flex w-[30px] flex-col items-center text-[13.500px] leading-[20px]"><T w={29}>ENG</T><T w={18}>US</T></div>
        <I s={21} className="ml-[21px]"><path d="M13 3H1v12h13M5 19h9M8 15v4" stroke="#222" strokeWidth="1.300" /><path d="M15 1h4v6h-4zM17 7v10c0 1-2 1-3 1" stroke="#222" strokeWidth="1.300" /></I>
        <I s={20} className="ml-[9px]"><path d="M1 7.500v5h3l4.500 4V3.500L4 7.500z" stroke="#222" strokeWidth="1.300" /><path d="M11 7c1.500 2 1.500 4 0 6M13.500 5c3 3 3 7 0 10" stroke="#222" strokeWidth="1.300" /><path d="M16 3c4 4 4 10 0 14" stroke="#aaa" strokeWidth="1.300" /></I>
        <I s={21} h={12} vb="0 0 21 12" className="ml-[10px]"><rect x=".7" y=".7" width="16.600" height="10.600" rx="2.500" stroke="#222" strokeWidth="1.300" /><rect x="3" y="3" width="5" height="6" fill="#222" /><path d="M18 3.500c3 0 3 5 0 5z" fill="#222" /></I>
        <div className="mr-[24px] flex w-[98px] flex-col items-end text-[13.500px] leading-[20px]"><T w={36}>21:14</T><T w={78}>27-05-2025</T></div>
      </div>
    </div>
  );
}

export default function App() {
  return (
    <div className="flex h-[1080px] w-[1920px] flex-col overflow-hidden bg-white font-['Open_Sans',sans-serif] leading-normal">
      <TitleBar />
      <div className="relative flex h-[937px] shrink-0">
        <div className="relative z-10 flex w-[324px] shrink-0 flex-col">
          <CommandTabs />
          <div className="flex min-h-0 flex-1"><LeftRail /><PropertyPanel /></div>
        </div>
        <div className="relative flex-1"><Viewport /></div>
      </div>
      <BottomTabs />
      <StatusBar />
      <Taskbar />
    </div>
  );
}
